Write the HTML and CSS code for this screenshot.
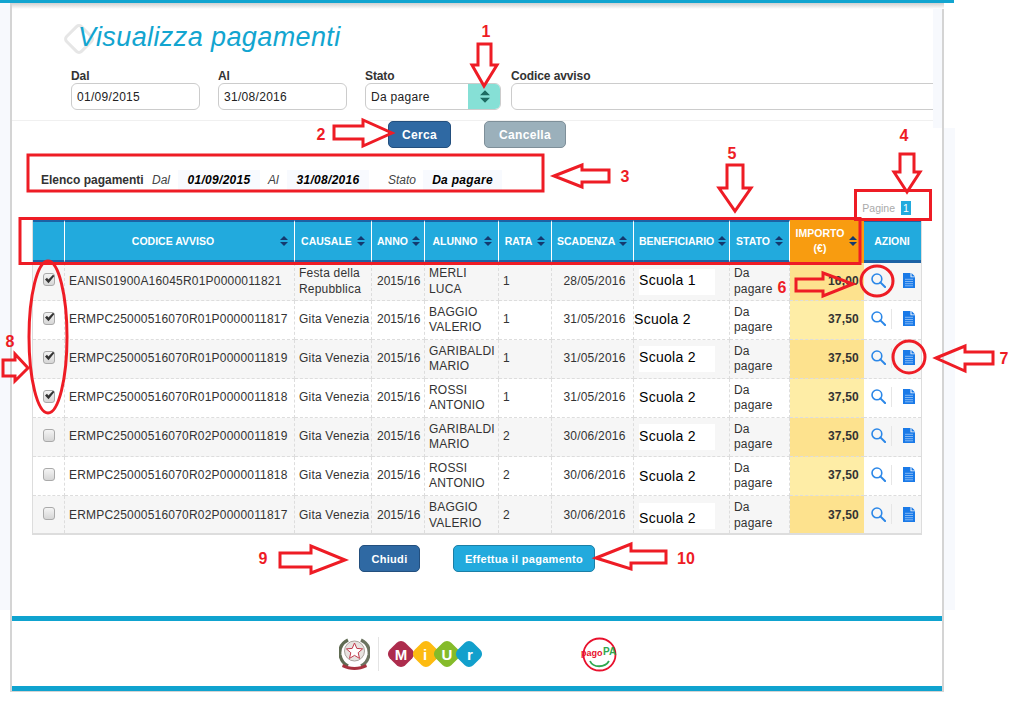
FILE: index.html
```html
<!DOCTYPE html>
<html lang="it">
<head>
<meta charset="utf-8">
<title>Visualizza pagamenti</title>
<link rel="stylesheet" href="styles.css">
</head>
<body>
<svg class="defs" width="0" height="0" aria-hidden="true">
  <symbol id="sort" viewBox="0 0 8 10"><path d="M4 0 8 4H0ZM0 6H8L4 10Z"/></symbol>
  <symbol id="tick" viewBox="0 0 11 10"><path d="M1 5.500 3 3.800 4.400 5.600 9 .8 10.400 2 4.500 9.200Z"/></symbol>
  <symbol id="lens" viewBox="0 0 16 16"><circle cx="6.300" cy="6.300" r="5.200" fill="none" stroke="currentColor" stroke-width="1.700"/><path d="M10 10l5 5" fill="none" stroke="currentColor" stroke-width="2.200" stroke-linecap="round"/></symbol>
  <symbol id="doc" viewBox="0 0 12 15"><path d="M0 0H7.500V4.200H12V15H0ZM8.500 0 12 3.400H8.500Z"/><path d="M2 6.300H10M2 8.500H10M2 10.700H10M2 12.800H10" stroke="#9cc6f8" stroke-width=".8"/></symbol>
</svg>
<div class="page">
  <div class="topbar"></div>
  <div class="panel">
    <div class="shade"></div>
    <div class="head">
      <div class="head-inner">
        <h1 class="title"><span class="title-mark"></span><span class="title-t">Visualizza pagamenti</span></h1>
        <div class="filters">
          <div class="field f-date"><label>Dal</label><div class="input">01/09/2015</div></div>
          <div class="field f-date"><label>Al</label><div class="input">31/08/2016</div></div>
          <div class="field f-state"><label>Stato</label><div class="input select">Da pagare<span class="select-btn"><svg class="sel-ico"><use href="#sort"/></svg></span></div></div>
          <div class="field f-code"><label>Codice avviso</label><div class="input open"></div></div>
        </div>
      </div>
    </div>
    <div class="actions act-top">
      <button class="btn dark b-cerca">Cerca</button>
      <button class="btn grey b-canc">Cancella</button>
    </div>
    <div class="summary">
      <b class="sum-title">Elenco pagamenti</b>
      <i class="sum-l l-dal">Dal</i><b class="sum-v v1">01/09/2015</b>
      <i class="sum-l l-al">Al</i><b class="sum-v v1">31/08/2016</b>
      <i class="sum-l l-st">Stato</i><b class="sum-v v2">Da pagare</b>
    </div>
    <div class="pager"><span class="pager-l">Pagine</span><span class="pager-n">1</span></div>
    <table class="grid">
      <colgroup><col class="c0"><col class="c1"><col class="c2"><col class="c3"><col class="c4"><col class="c5"><col class="c6"><col class="c7"><col class="c8"><col class="c9"><col class="c10"></colgroup>
      <thead>
        <tr>
          <th></th>
          <th><div class="th"><span class="lab">CODICE AVVISO</span><svg class="si"><use href="#sort"/></svg></div></th>
          <th><div class="th"><span class="lab">CAUSALE</span><svg class="si"><use href="#sort"/></svg></div></th>
          <th><div class="th"><span class="lab">ANNO</span><svg class="si"><use href="#sort"/></svg></div></th>
          <th><div class="th"><span class="lab">ALUNNO</span><svg class="si"><use href="#sort"/></svg></div></th>
          <th><div class="th"><span class="lab">RATA</span><svg class="si"><use href="#sort"/></svg></div></th>
          <th><div class="th"><span class="lab">SCADENZA</span><svg class="si"><use href="#sort"/></svg></div></th>
          <th><div class="th"><span class="lab">BENEFICIARIO</span><svg class="si"><use href="#sort"/></svg></div></th>
          <th><div class="th"><span class="lab">STATO</span><svg class="si"><use href="#sort"/></svg></div></th>
          <th class="th-imp"><div class="th"><span class="lab">IMPORTO (€)</span><svg class="si"><use href="#sort"/></svg></div></th>
          <th class="th-az"><div class="th"><span class="lab">AZIONI</span></div></th>
        </tr>
      </thead>
      <tbody>
        <tr>
          <td class="ck"><span class="box"><svg class="tk"><use href="#tick"/></svg></span></td>
          <td>EANIS01900A16045R01P0000011821</td><td>Festa della Repubblica</td><td class="an">2015/16</td><td>MERLI LUCA</td><td>1</td><td class="ctr">28/05/2016</td>
          <td class="ben"><span class="sc l22">Scuola 1</span></td><td>Da pagare</td><td class="imp">16,00</td>
          <td class="az"><div class="azw"><svg class="lens"><use href="#lens"/></svg><span class="sep"></span><svg class="doc"><use href="#doc"/></svg></div></td>
        </tr>
        <tr>
          <td class="ck"><span class="box"><svg class="tk"><use href="#tick"/></svg></span></td>
          <td>ERMPC25000516070R01P0000011817</td><td>Gita Venezia</td><td class="an">2015/16</td><td>BAGGIO VALERIO</td><td>1</td><td class="ctr">31/05/2016</td>
          <td class="ben"><span class="sc l24 p2">Scuola 2</span></td><td>Da pagare</td><td class="imp">37,50</td>
          <td class="az"><div class="azw"><svg class="lens"><use href="#lens"/></svg><span class="sep"></span><svg class="doc"><use href="#doc"/></svg></div></td>
        </tr>
        <tr>
          <td class="ck"><span class="box"><svg class="tk"><use href="#tick"/></svg></span></td>
          <td>ERMPC25000516070R01P0000011819</td><td>Gita Venezia</td><td class="an">2015/16</td><td>GARIBALDI MARIO</td><td>1</td><td class="ctr">31/05/2016</td>
          <td class="ben"><span class="sc l22">Scuola 2</span></td><td>Da pagare</td><td class="imp">37,50</td>
          <td class="az"><div class="azw"><svg class="lens"><use href="#lens"/></svg><span class="sep"></span><svg class="doc"><use href="#doc"/></svg></div></td>
        </tr>
        <tr>
          <td class="ck"><span class="box"><svg class="tk"><use href="#tick"/></svg></span></td>
          <td>ERMPC25000516070R01P0000011818</td><td>Gita Venezia</td><td class="an">2015/16</td><td>ROSSI ANTONIO</td><td>1</td><td class="ctr">31/05/2016</td>
          <td class="ben"><span class="sc l24">Scuola 2</span></td><td>Da pagare</td><td class="imp">37,50</td>
          <td class="az"><div class="azw"><svg class="lens"><use href="#lens"/></svg><span class="sep"></span><svg class="doc"><use href="#doc"/></svg></div></td>
        </tr>
        <tr>
          <td class="ck"><span class="box"></span></td>
          <td>ERMPC25000516070R02P0000011819</td><td>Gita Venezia</td><td class="an">2015/16</td><td>GARIBALDI MARIO</td><td>2</td><td class="ctr">30/06/2016</td>
          <td class="ben"><span class="sc l24">Scuola 2</span></td><td>Da pagare</td><td class="imp">37,50</td>
          <td class="az"><div class="azw"><svg class="lens"><use href="#lens"/></svg><span class="sep"></span><svg class="doc"><use href="#doc"/></svg></div></td>
        </tr>
        <tr>
          <td class="ck"><span class="box"></span></td>
          <td>ERMPC25000516070R02P0000011818</td><td>Gita Venezia</td><td class="an">2015/16</td><td>ROSSI ANTONIO</td><td>2</td><td class="ctr">30/06/2016</td>
          <td class="ben"><span class="sc l26">Scuola 2</span></td><td>Da pagare</td><td class="imp">37,50</td>
          <td class="az"><div class="azw"><svg class="lens"><use href="#lens"/></svg><span class="sep"></span><svg class="doc"><use href="#doc"/></svg></div></td>
        </tr>
        <tr>
          <td class="ck"><span class="box"></span></td>
          <td>ERMPC25000516070R02P0000011817</td><td>Gita Venezia</td><td class="an">2015/16</td><td>BAGGIO VALERIO</td><td>2</td><td class="ctr">30/06/2016</td>
          <td class="ben"><span class="sc l30">Scuola 2</span></td><td>Da pagare</td><td class="imp">37,50</td>
          <td class="az"><div class="azw"><svg class="lens"><use href="#lens"/></svg><span class="sep"></span><svg class="doc"><use href="#doc"/></svg></div></td>
        </tr>
      </tbody>
    </table>
    <div class="actions act-bottom">
      <button class="btn dark b-chiudi">Chiudi</button>
      <button class="btn blue b-paga">Effettua il pagamento</button>
    </div>
    <footer class="foot">
      <svg class="emblem" viewBox="0 0 31 34">
        <path d="M9 3C3 6 0 11 1 18c1 5 4 9 8 11" fill="none" stroke="#5f6b52" stroke-width="3.200"/>
        <path d="M22 3c6 3 9 8 8 15-1 5-4 9-8 11" fill="none" stroke="#6b7360" stroke-width="3.200"/>
        <circle cx="15.500" cy="14" r="10" fill="#e7e3e0" stroke="#a9a39d"/>
        <path d="M15.500 6l2.300 5.400 5.800.5-4.400 3.800 1.300 5.700-5-3-5 3 1.300-5.700-4.400-3.800 5.800-.5Z" fill="#fff" stroke="#c0394b"/>
        <path d="M4 27c7 4 16 4 23 0l1 3c-8 4-17 4-25 0Z" fill="#a8323f"/>
      </svg>
      <span class="foot-sep"></span>
      <svg class="miur" viewBox="0 0 96 28">
        <rect x="3" y="3" width="22" height="22" rx="6" transform="rotate(45 14 14)" fill="#ad2c4d"/>
        <rect x="28" y="3" width="22" height="22" rx="6" transform="rotate(45 39 14)" fill="#fdbb11"/>
        <rect x="49" y="3" width="22" height="22" rx="6" transform="rotate(45 60 14)" fill="#85bb2a"/>
        <rect x="71" y="3" width="22" height="22" rx="6" transform="rotate(45 82 14)" fill="#12a0cc"/>
        <text class="miur-t" x="14" y="19.500" text-anchor="middle">M</text>
        <text class="miur-t" x="38" y="19.500" text-anchor="middle">i</text>
        <text class="miur-t" x="60" y="19.500" text-anchor="middle">U</text>
        <text class="miur-t" x="83" y="19.500" text-anchor="middle">r</text>
      </svg>
      <svg class="pagopa" viewBox="0 0 36 35">
        <circle cx="18.500" cy="17.500" r="16" fill="#fff" stroke="#e8112d" stroke-width="1.800"/>
        <path d="M9 24c3 7 15 7 19 0" fill="none" stroke="#2fa84f" stroke-width="1.800"/>
        <text class="pago-a" x="0" y="19">pago</text>
        <text class="pago-b" x="22" y="18">PA</text>
      </svg>
    </footer>
  </div>
</div>
<svg class="notes" viewBox="0 0 1023 709">
  <g class="marks">
    <path d="M478 44H491V65H497L484 86 472 65H478Z"/>
    <path d="M334 126H363V120L392 133 363 146V139H334Z"/>
    <rect x="28" y="155" width="515" height="36"/>
    <path d="M554 176 582 165V170H609V182H582V187Z"/>
    <rect x="855.500" y="190.500" width="75" height="29"/>
    <path d="M900 154H914V172H920L907 192 894 172H900Z"/>
    <path d="M727 165H743V188H751L735 211 719 188H727Z"/>
    <rect x="20" y="218.500" width="840" height="45"/>
    <path d="M796 279H823V273L853 284 823 296V291H796Z"/>
    <ellipse cx="877" cy="281" rx="16" ry="15"/>
    <ellipse cx="909" cy="357" rx="16" ry="16"/>
    <path d="M936 358 965 346V352H993V364H965V371Z"/>
    <ellipse cx="48" cy="337" rx="19" ry="76"/>
    <path d="M3 360H15V354L28 368 15 381V376H3Z"/>
    <path d="M280 553H311V546L345 560 311 573V567H280Z"/>
    <path d="M596 558 631 544V551H666V563H631V569Z"/>
  </g>
  <g class="nums">
    <text x="486" y="37">1</text>
    <text x="321" y="140">2</text>
    <text x="625" y="182">3</text>
    <text x="904" y="141">4</text>
    <text x="732" y="159">5</text>
    <text x="782" y="293">6</text>
    <text x="1004" y="364">7</text>
    <text x="10" y="347">8</text>
    <text x="263" y="564">9</text>
    <text x="686" y="564">10</text>
  </g>
</svg>
</body>
</html>
```

FILE: styles.css
```css
* { box-sizing: border-box; }
html, body { margin: 0; padding: 0; background: #fff; }
body {
  position: relative;
  width: 1023px;
  height: 709px;
  overflow: hidden;
  font-family: "Liberation Sans", Arial, sans-serif;
  font-size: 12px;
  color: #333;
}
.defs { position: absolute; }

.page {
  width: 955px;
  height: 692px;
  background:
    linear-gradient(#f7f9fd, #f7f9fd) 0 0 / 11px 610px no-repeat,
    linear-gradient(#f7f9fd, #f7f9fd) 944px 128px / 11px 482px no-repeat;
}
.topbar { height: 3px; width: 954px; background: #12a5d0; }

.panel {
  margin-left: 10px;
  width: 934px;
  height: 689px;
  background: #fff;
  border-left: 2px solid #d4d4d4;
  border-right: 2px solid #d4d4d4;
  border-bottom: 1px solid #d4d4d4;
}
.shade { height: 6px; background: linear-gradient(#d0d0d0, #fff); margin-right: -2px; }

.head { height: 119px; background: #f7f9fd; }
.head-inner { width: 921px; height: 119px; background: #fff; }

.title {
  position: relative;
  margin: 0 0 0 66px;
  padding-top: 13px;
  height: 43px;
  font-size: 27px;
  line-height: 30px;
  font-weight: 400;
  font-style: italic;
  color: #12a5d0;
  letter-spacing: .4px;
}
.title-t { position: relative; }
.title-mark {
  position: absolute;
  left: -11px;
  top: 18px;
  width: 24px;
  height: 24px;
  border: 3px solid #e6e6e6;
  border-radius: 5px;
  transform: rotate(45deg);
}

.filters {
  display: flex;
  margin-top: 16px;
  padding: 0 0 10px 59px;
  height: 53px;
  border-bottom: 1px solid #f0f0f0;
  overflow: hidden;
}
.field { flex: none; display: flex; flex-direction: column; }
.field label { font-weight: 700; height: 15px; line-height: 16px; letter-spacing: -.1px; }
.f-date { width: 129px; margin-right: 18px; }
.f-state { width: 136px; margin-right: 10px; }
.f-code { width: 440px; }
.input {
  position: relative;
  height: 27px;
  border: 1px solid #ccc;
  border-radius: 6px;
  background: #fff;
  padding: 1px 0 0 5px;
  line-height: 25px;
  letter-spacing: .3px;
  color: #222;
}
.select { overflow: hidden; }
.select-btn {
  position: absolute;
  right: -1px;
  top: -1px;
  width: 33px;
  height: 27px;
  background: #86e0d6;
  display: flex;
  align-items: center;
  justify-content: center;
}
.sel-ico { width: 10px; height: 13px; fill: #1d6b62; }

.actions { display: flex; }
.act-top { margin-top: -7px; padding-left: 376px; gap: 33px; }
.act-bottom { margin-top: 10px; padding-left: 347px; gap: 33px; }
.btn {
  height: 27px;
  padding: 0;
  border-radius: 5px;
  font-family: inherit;
  font-weight: 700;
  font-size: 12px;
  color: #fff;
  letter-spacing: .3px;
}
.dark { background: #2f69a3; border: 1px solid #234f7e; }
.grey { background: #9bb0bb; border: 1px solid #7e8f99; }
.blue { background: #22aadd; border: 1px solid #1b7fa6; }
.b-cerca { width: 63px; }
.b-canc { width: 82px; }
.b-chiudi { width: 61px; font-size: 11px; }
.b-paga { width: 142px; font-size: 11px; }

.summary {
  display: flex;
  align-items: center;
  height: 20px;
  margin-top: 22px;
  padding-left: 29px;
  color: #111;
}
.sum-title { width: 111px; color: #333; }
.sum-l { color: #444; font-weight: 400; }
.l-dal { width: 26px; }
.l-al { width: 19px; margin-left: 8px; }
.l-st { width: 35px; margin-left: 19px; }
.sum-v {
  height: 20px;
  line-height: 20px;
  background: #f8fafe;
  font-style: italic;
  text-align: center;
  color: #000;
  letter-spacing: .3px;
}
.v1 { width: 82px; }
.v2 { width: 79px; }

.pager {
  display: flex;
  justify-content: flex-end;
  align-items: center;
  height: 14px;
  margin-top: 11px;
  padding-right: 31px;
  font-size: 10.500px;
  gap: 6px;
}
.pager-l { color: #aaa; }
.pager-n { width: 10px; height: 14px; line-height: 14px; background: #22aadd; color: #fff; text-align: center; }

.grid {
  table-layout: fixed;
  border-collapse: separate;
  border-spacing: 0;
  width: 890px;
  margin: 5px 0 0 20px;
  border-left: 1px solid #ddd;
  border-right: 1px solid #ddd;
  border-bottom: 2px solid #ddd;
}
.c0 { width: 32px; }
.c1 { width: 230px; }
.c2 { width: 77px; }
.c3 { width: 53px; }
.c4 { width: 74px; }
.c5 { width: 53px; }
.c6 { width: 82px; }
.c7 { width: 96px; }
.c8 { width: 60px; }
.c9 { width: 74px; }
.c10 { width: 57px; }

.grid th {
  height: 43px;
  padding: 0 6px 0 5px;
  background: #22aadd;
  border-top: 2px solid #1c62a5;
  border-bottom: 3px solid #1c62a5;
  border-right: 1px solid #fff;
  color: #fff;
  font-size: 10.500px;
  line-height: 15px;
  font-weight: 700;
}
.grid th:last-child { border-right: 0; }
.grid .th-imp { background: #f89c10; border-top-color: #f89c10; border-bottom-color: #f89c10; border-right-color: #f89c10; }
.th { display: flex; align-items: center; gap: 4px; }
.lab { flex: 1; text-align: center; }
.si { flex: none; width: 8px; height: 10px; fill: #14396e; }

.grid td {
  height: 39px;
  padding: 0 0 0 4px;
  border-bottom: 1px dashed #ddd;
  border-right: 1px dashed #ddd;
  font-size: 12px;
  line-height: 15.500px;
  color: #333;
  letter-spacing: .2px;
  background: #fff;
}
.grid tbody tr:first-child td { height: 38px; }
.grid tbody tr:nth-child(odd) td { background: #f6f6f6; }
.grid tbody tr:last-child td { border-bottom: 0; height: 37px; padding-top: 2px; }
.grid td:last-child { border-right: 0; }
.grid td.ctr { text-align: center; }
.grid td.an { padding-left: 5px; letter-spacing: 0; }
.grid td.imp {
  background: #feeda6;
  text-align: right;
  font-weight: 700;
  padding-right: 5px;
  border-right: 0;
}
.grid tbody tr:nth-child(odd) td.imp { background: #fde28e; }

.grid td.ck { padding: 0 0 4px 10px; }
.box {
  display: flex;
  width: 12px;
  height: 13px;
  align-items: center;
  justify-content: center;
  border: 1px solid #aaa;
  border-radius: 3px;
  background: linear-gradient(#f4f4f4, #d6d6d6);
}
.tk { width: 11px; height: 10px; fill: #333; margin-top: -2px; flex: none; }

.grid td.ben { padding: 0 0 0 5px; font-size: 14px; color: #000; }
.sc {
  display: block;
  width: 76px;
  height: 26px;
  background: #fff;
  letter-spacing: .3px;
}
.l22 { line-height: 22px; }
.l24 { line-height: 24px; }
.l26 { line-height: 26px; }
.l30 { line-height: 30px; }
.p2 { margin-left: -5px; }

.grid td.az { padding: 0 0 3px 7px; }
.azw { display: flex; align-items: center; }
.lens { width: 15px; height: 15px; color: #2b87e8; flex: none; }
.sep { width: 1px; height: 20px; background: #e6e6e6; margin: 0 11px 0 5px; flex: none; }
.doc { width: 12px; height: 15px; fill: #1a7ae8; flex: none; }

.foot {
  display: flex;
  align-items: flex-start;
  height: 75px;
  margin-top: 44px;
  padding: 16px 0 0 327px;
  border-top: 5px solid #0fa3cf;
  border-bottom: 5px solid #0fa3cf;
}
.emblem { width: 31px; height: 34px; flex: none; }
.foot-sep { width: 1px; height: 34px; background: #e4e4e4; margin: 0 8px 0 8px; flex: none; }
.miur { width: 96px; height: 28px; margin-top: 3px; flex: none; }
.miur-t { font-size: 15px; font-weight: 700; fill: #fff; }
.pagopa { width: 36px; height: 35px; margin-left: 98px; flex: none; overflow: visible; }
.pago-a { font-size: 9px; font-weight: 700; fill: #e8112d; }
.pago-b { font-size: 10px; font-weight: 700; fill: #2fa84f; }

.notes {
  position: absolute;
  left: 0;
  top: 0;
  width: 1023px;
  height: 709px;
  pointer-events: none;
}
.marks { fill: none; stroke: #ee1c25; stroke-width: 3; }
.nums text { fill: #ee1c25; font-size: 16px; font-weight: 700; text-anchor: middle; }
```
